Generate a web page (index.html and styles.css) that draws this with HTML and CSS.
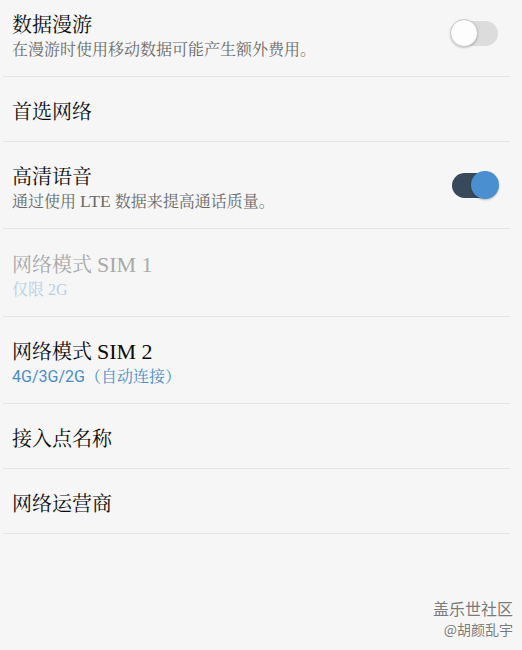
FILE: index.html
```html
<!DOCTYPE html>
<html lang="zh-CN">
<head>
<meta charset="utf-8">
<link rel="stylesheet" href="styles.css">
</head>
<body>
<div class="screen">
  <ul class="list">
    <li class="row two">
      <div class="text">
        <div class="title">数据漫游</div>
        <div class="sub">在漫游时使用移动数据可能产生额外费用。</div>
      </div>
      <div class="toggle off"><span class="track"></span><span class="thumb"></span></div>
    </li>
    <li class="row one">
      <div class="text"><div class="title">首选网络</div></div>
    </li>
    <li class="row two">
      <div class="text">
        <div class="title">高清语音</div>
        <div class="sub">通过使用 <span class="big">LTE</span> 数据来提高通话质量。</div>
      </div>
      <div class="toggle on"><span class="track"></span><span class="thumb"></span></div>
    </li>
    <li class="row two tall disabled">
      <div class="text">
        <div class="title">网络模式 <span class="big">SIM 1</span></div>
        <div class="sub">仅限 2G</div>
      </div>
    </li>
    <li class="row two">
      <div class="text">
        <div class="title">网络模式 <span class="big">SIM 2</span></div>
        <div class="sub accent"><span class="latin">4G/3G/2G</span>（自动连接）</div>
      </div>
    </li>
    <li class="row one">
      <div class="text"><div class="title">接入点名称</div></div>
    </li>
    <li class="row one">
      <div class="text"><div class="title">网络运营商</div></div>
    </li>
  </ul>
  <div class="watermark">
    <div class="wm-1">盖乐世社区</div>
    <div class="wm-2">@胡颜乱宇</div>
  </div>
</div>
</body>
</html>
```
FILE: styles.css
```css
html, body {
  margin: 0;
  padding: 0;
  background: #f6f6f6;
}
.screen {
  position: relative;
  width: 522px;
  height: 650px;
  overflow: hidden;
  font-family: "Liberation Serif", "Noto Serif CJK SC", "Noto Sans CJK SC", serif;
}
.list {
  list-style: none;
  margin: -10px 12px 0 3px;
  padding: 0;
}
.row {
  display: flex;
  align-items: center;
  border-bottom: 1px solid #e5e5e5;
  padding: 0 12px 0 9px;
  box-sizing: border-box;
}
.row.two {
  height: 87px;
  padding-top: 8px;
}
.row.two.tall {
  height: 88px;
}
.row.one {
  height: 65px;
  padding-top: 6px;
}
.text {
  flex: 1;
}
.title {
  font-size: 20px;
  line-height: 25px;
  color: #0a0a0a;
}
.big {
  font-size: 1.1em;
  line-height: 1;
}
.sub {
  font-size: 16px;
  line-height: 22px;
  color: #6a6a6a;
  margin-top: 1px;
}
.disabled .title {
  color: #a9a9a9;
}
.disabled .sub {
  color: #b7d0e6;
}
.sub.accent {
  color: #4a8dc9;
}
.latin {
  font-family: Roboto, "Liberation Sans", sans-serif;
}
.toggle {
  position: relative;
  width: 48px;
  height: 28px;
  flex: none;
  margin-top: -8px;
}
.track {
  position: absolute;
  left: 2px;
  right: 0;
  top: 2px;
  height: 25px;
  border-radius: 13px;
}
.thumb {
  position: absolute;
  top: 0;
  width: 28px;
  height: 28px;
  border-radius: 50%;
  box-sizing: border-box;
}
.toggle.off .track {
  background: #dcdcdc;
}
.toggle.off .thumb {
  left: 0;
  background: #fdfdfd;
  border: 1px solid #c8c8c8;
  box-shadow: 0 1px 2px rgba(0,0,0,0.2);
}
.toggle.on .track {
  background: #37495b;
}
.toggle.on .thumb {
  right: -1px;
  background: #4a8fcf;
  box-shadow: 0 1px 2px rgba(0,0,0,0.25);
}
.watermark {
  position: absolute;
  right: 9px;
  top: 597px;
  text-align: right;
  font-family: "Noto Sans CJK SC", sans-serif;
  color: #7a7a7a;
  text-shadow: 0 0 2px #fff;
}
.wm-1 {
  font-size: 16px;
  line-height: 22px;
}
.wm-2 {
  font-size: 14px;
  line-height: 20px;
}
```
